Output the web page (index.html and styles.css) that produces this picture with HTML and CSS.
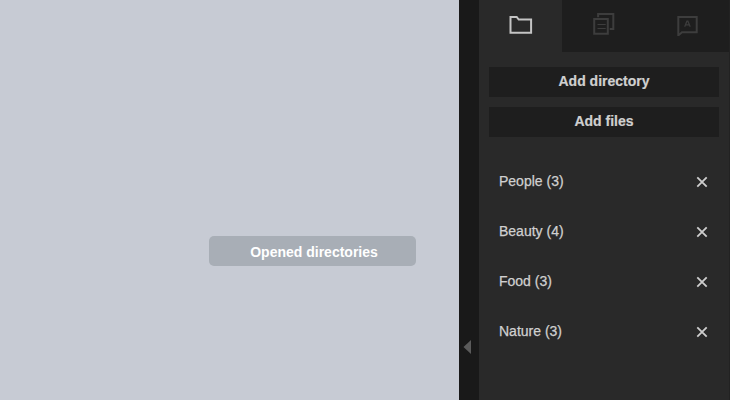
FILE: index.html
```
<!DOCTYPE html>
<html lang="en">
<head>
<meta charset="utf-8">
<title>Directories</title>
<link rel="stylesheet" href="styles.css">
</head>
<body>
<div class="app">
  <main class="canvas"><div class="tooltip">Opened directories</div></main>
  <div class="divider"><svg width="8" height="14" viewBox="0 0 8 14"><path d="M.5 7 8 0v14z" fill="#5b5b5b"/></svg></div>
  <aside class="panel">
    <nav class="tabs">
      <div class="tab active"><svg class="icon" width="24" height="24" viewBox="0 0 24 24"><path d="M1.5 5h6.2l2 2.5h12.4v13.2H1.5z"/></svg></div>
      <div class="tab"><svg class="icon" width="24" height="24" viewBox="0 0 24 24"><path d="M2.2 7h13.6v14.8H2.2zM6.1 5.2V2h15.2v15h-3.6"/><path class="thin" d="M5.5 12.5h8.2M5.5 16.5h8.2"/></svg></div>
      <div class="tab"><svg class="icon" width="24" height="24" viewBox="0 0 24 24"><path d="M2.3 5h18.4v15.2H6L2.3 23.4z"/><path class="thin" d="m8.7 14.8 2.2-5.6h1l2.3 5.6M9.5 12.9h3.8"/></svg></div>
    </nav>
    <div class="buttons">
      <button class="button">Add directory</button>
      <button class="button">Add files</button>
    </div>
    <ul class="list">
      <li><span>People (3)</span><svg class="close" width="12" height="12" viewBox="0 0 12 12"><path d="m1.3 1.3 9.4 9.4m0-9.4-9.4 9.4"/></svg></li>
      <li><span>Beauty (4)</span><svg class="close" width="12" height="12" viewBox="0 0 12 12"><path d="m1.3 1.3 9.4 9.4m0-9.4-9.4 9.4"/></svg></li>
      <li><span>Food (3)</span><svg class="close" width="12" height="12" viewBox="0 0 12 12"><path d="m1.3 1.3 9.4 9.4m0-9.4-9.4 9.4"/></svg></li>
      <li><span>Nature (3)</span><svg class="close" width="12" height="12" viewBox="0 0 12 12"><path d="m1.3 1.3 9.4 9.4m0-9.4-9.4 9.4"/></svg></li>
    </ul>
  </aside>
</div>
</body>
</html>
```
FILE: styles.css
```
* { box-sizing: border-box; }
body { margin: 0; font: 14px/20px "Liberation Sans", Arial, sans-serif; color: #d0d0d0; }
.app { display: flex; height: 400px; overflow: hidden; }
.canvas { position: relative; width: 459px; background: #c7cbd4; }
.tooltip {
  position: absolute; left: 209px; top: 236px; width: 207px; height: 30px;
  padding: 1px 0 0 3px;
  border-radius: 5px; background: #a8aeb6; color: #fff;
  font-weight: bold; line-height: 30px; text-align: center;
}
.divider { display: flex; align-items: flex-start; width: 20px; padding: 340px 0 0 4px; background: #191919; }
.divider svg { display: block; }
.panel { width: 251px; background: #292929; border-right: 1px solid #222; }
.tabs { display: grid; grid-template-columns: 83px 84px 83px; height: 52px; }
.tab { display: flex; align-items: center; justify-content: center; background: #1e1e1e; color: #3d3d3d; padding-bottom: 4px; }
.active { background: #292929; color: #c4c4c4; }
.icon { fill: none; stroke: currentColor; stroke-width: 2; }
.thin { stroke-width: 1.2; }
.buttons { display: grid; gap: 10px; padding: 15px 10px 0; }
.button {
  height: 30px; padding: 0 0 2px; border: 0; background: #1e1e1e;
  color: #d0d0d0; font: bold 14px/20px "Liberation Sans", Arial, sans-serif;
  -webkit-text-stroke: .2px #d0d0d0;
}
.list { margin: 19px 0 0; padding: 0 21px 0 20px; list-style: none; }
.list li { display: flex; align-items: center; justify-content: space-between; height: 50px; -webkit-text-stroke: .25px #d0d0d0; }
.close { margin-top: 2px; fill: none; stroke: #cecece; stroke-width: 1.8; }
```
